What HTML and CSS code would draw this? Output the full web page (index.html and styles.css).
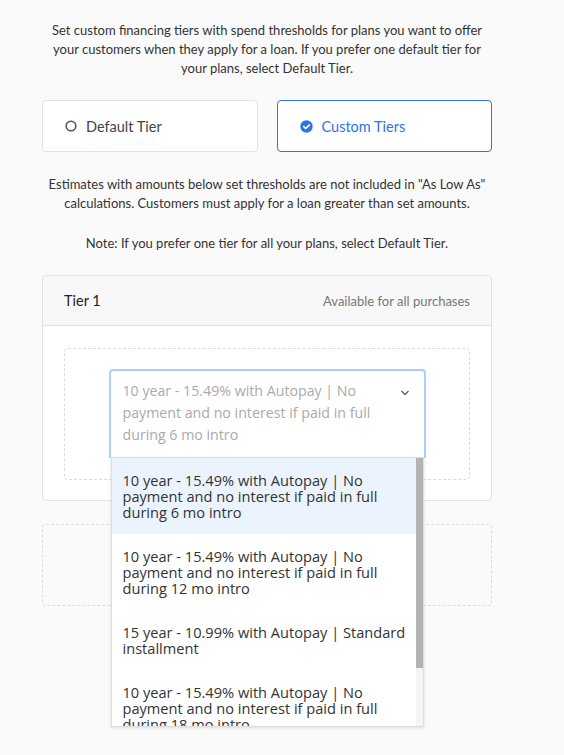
FILE: index.html
```html
<!DOCTYPE html>
<html>
<head>
<meta charset="utf-8">
<link rel="stylesheet" href="styles.css">
</head>
<body>
<div class="page">
  <p class="intro">Set custom financing tiers with spend thresholds for plans you want to offer your customers when they apply for a loan. If you prefer one default tier for your plans, select Default Tier.</p>
  <div class="choices">
    <div class="choice">
      <svg class="ico" width="12" height="12" viewBox="0 0 12 12"><circle cx="6" cy="6" r="4.8" fill="none" stroke="#555" stroke-width="1.6"/></svg>
      <span>Default Tier</span>
    </div>
    <div class="choice active">
      <svg class="ico" width="13" height="13" viewBox="0 0 13 13"><circle cx="6.5" cy="6.5" r="6.2" fill="#2d74e8"/><path d="M3.8 6.7 L5.7 8.5 L9.3 4.8" fill="none" stroke="#fff" stroke-width="1.7" stroke-linecap="round" stroke-linejoin="round"/></svg>
      <span>Custom Tiers</span>
    </div>
  </div>
  <p class="note">Estimates with amounts below set thresholds are not included in "As Low As" calculations. Customers must apply for a loan greater than set amounts.</p>
  <p class="note2">Note: If you prefer one tier for all your plans, select Default Tier.</p>
  <div class="card">
    <div class="card-head">
      <span class="tier">Tier 1</span>
      <span class="avail">Available for all purchases</span>
    </div>
    <div class="card-body">
      <div class="dashed">
        <div class="select-wrap">
          <div class="select">
            <span class="placeholder">10 year - 15.49% with Autopay | No payment and no interest if paid in full during 6 mo intro</span>
            <svg class="chev" width="10" height="6" viewBox="0 0 10 6"><path d="M1.5 1 L5 4.5 L8.5 1" fill="none" stroke="#666" stroke-width="1.5"/></svg>
          </div>
          <div class="menu">
            <div class="options">
              <div class="opt hl">10 year - 15.49% with Autopay | No payment and no interest if paid in full during 6 mo intro</div>
              <div class="opt">10 year - 15.49% with Autopay | No payment and no interest if paid in full during 12 mo intro</div>
              <div class="opt">15 year - 10.99% with Autopay | Standard installment</div>
              <div class="opt">10 year - 15.49% with Autopay | No payment and no interest if paid in full during 18 mo intro</div>
            </div>
            <div class="scroll"><div class="thumb"></div></div>
          </div>
        </div>
      </div>
    </div>
  </div>
  <div class="dashed2"></div>
</div>
</body>
</html>
```
FILE: styles.css
```css
html, body {
  margin: 0;
  padding: 0;
  background: #fafafa;
}
body {
  font-family: "Lato", "Open Sans", sans-serif;
  color: #333;
  min-height: 755px;
}
.page {
  width: 450px;
  margin-left: 42px;
  padding-top: 21px;
}
.intro {
  margin: 0;
  font-size: 13px;
  line-height: 19px;
  text-align: center;
  color: #333;
}
.choices {
  display: flex;
  gap: 19px;
  margin-top: 22px;
}
.choice {
  flex: 1;
  height: 52px;
  box-sizing: border-box;
  border: 1px solid #e2e2e2;
  border-radius: 4px;
  background: #fff;
  display: flex;
  align-items: center;
  gap: 9px;
  padding-left: 22px;
  font-size: 14.5px;
  color: #444;
}
.choice.active {
  border: 1px solid #2d74e8;
  color: #2d74e8;
}
.ico { display: block; }
.note {
  margin: 23px 0 0 0;
  font-size: 13px;
  line-height: 19px;
  text-align: center;
  color: #333;
}
.note2 {
  margin: 21px 0 0 0;
  font-size: 13px;
  line-height: 19px;
  text-align: center;
  color: #333;
}
.card {
  margin-top: 22px;
  border: 1px solid #e2e2e2;
  border-radius: 4px;
  background: #fff;
}
.card-head {
  height: 50px;
  box-sizing: border-box;
  background: #f8f8f8;
  border-bottom: 1px solid #e2e2e2;
  border-radius: 4px 4px 0 0;
  display: flex;
  align-items: center;
  justify-content: space-between;
  padding: 0 21px;
}
.tier {
  font-size: 14.5px;
  color: #222;
}
.avail {
  font-size: 13px;
  color: #777;
}
.card-body {
  padding: 22px 21px 20px;
}
.dashed {
  border: 1px dashed #dcdcdc;
  border-radius: 4px;
  height: 132px;
  box-sizing: border-box;
  padding-top: 20px;
  display: flex;
  justify-content: center;
}
.select-wrap {
  position: relative;
  z-index: 5;
  width: 317px;
}
.select {
  box-sizing: border-box;
  height: 89px;
  border: 2px solid #a9cffa;
  border-bottom: none;
  border-radius: 4px 4px 0 0;
  background: #fff;
  display: flex;
  align-items: flex-start;
  padding: 9px 14px 0 12px;
}
.placeholder {
  flex: 1;
  font-family: "Open Sans", sans-serif;
  font-size: 14.2px;
  line-height: 22px;
  color: #aaa;
  padding-right: 20px;
}
.chev {
  margin-top: 10px;
  flex: none;
}
.menu {
  position: absolute;
  left: 2px;
  top: 88px;
  width: 313px;
  height: 270px;
  box-sizing: border-box;
  background: #fff;
  border: 1px solid #dedede;
  box-shadow: 0 1px 3px rgba(0,0,0,0.12);
  overflow: hidden;
  display: flex;
}
.options {
  flex: 1;
}
.opt {
  font-family: "Open Sans", sans-serif;
  font-size: 14.6px;
  line-height: 16px;
  color: #333;
  padding: 14px 6px 14px 11px;
}
.opt.hl {
  background: #ebf3fe;
}
.scroll {
  width: 7px;
  background: #f4f4f4;
  flex: none;
}
.thumb {
  height: 210px;
  background: #b3b3b3;
}
.dashed2 {
  margin-top: 23px;
  height: 80px;
  border: 1px dashed #dcdcdc;
  border-radius: 4px;
}
```
